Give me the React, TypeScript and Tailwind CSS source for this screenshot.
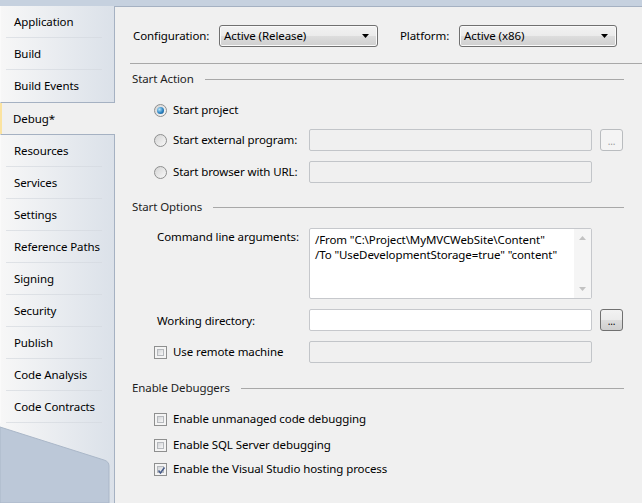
import React from "react";

const TAB_BG = "bg-linear-to-r from-[#f7f7f7] to-[#dbe1e9]";

function Tab({ label, sep = true }: { label: string; sep?: boolean }) {
  return (
    <div className="h-[32px] flex flex-col">
      <div className="flex-1 flex items-center pl-[13px] pt-[1px]">{label}</div>
      <div className={sep ? "ml-[5px] w-[96px] h-px bg-linear-to-r from-[#dfe2e6] to-[#d7dce3]" : "h-px"} />
    </div>
  );
}

function Combo({ text, w }: { text: string; w: string }) {
  return (
    <div
      className={`${w} h-[22px] border border-[#707070] rounded-[3px] bg-[linear-gradient(#f2f2f2,#ebebeb_50%,#dddddd_50%,#cfcfcf)] flex items-center pl-[4px] pr-[7px] shadow-[inset_0_0_0_1px_#fafafa]`}
    >
      <span className="flex-1">{text}</span>
      <svg width="8" height="5" viewBox="0 0 8 5">
        <polygon points="0,0 7,0 3.5,4" fill="#000" />
      </svg>
    </div>
  );
}

function Header({ text }: { text: string }) {
  return (
    <div className="h-[16px] flex items-center pl-[17px] pr-[18px]">
      <span className="text-[#1e1e1e]">{text}</span>
      <div className="flex-1 h-px bg-[#a8a8a8] ml-[11px]" />
    </div>
  );
}

function Radio({ checked }: { checked?: boolean }) {
  return (
    <div className="w-[13px] h-[13px] rounded-full border border-[#8e8f8f] bg-[linear-gradient(135deg,#d4d4d4,#f9f9f9)] flex items-center justify-center shrink-0">
      {checked && (
        <div className="w-[7px] h-[7px] rounded-full bg-[radial-gradient(circle_at_35%_35%,#b7e6fb,#2c83c2_55%,#0f4a7a)]" />
      )}
    </div>
  );
}

function Check({ checked }: { checked?: boolean }) {
  return (
    <div className="w-[13px] h-[13px] border border-[#8e8f8f] bg-[#f4f4f4] p-[2px] shrink-0 relative">
      <div className="w-full h-full border border-[#b6b9bd] bg-[linear-gradient(135deg,#d3d5d8,#f7f7f7)]" />
      {checked && (
        <svg className="absolute left-[1px] top-[1px]" width="11" height="11" viewBox="0 0 11 11">
          <path d="M2.5 5.5 L4.5 8 L8.5 2.5" stroke="#4a5e8a" strokeWidth="1.6" fill="none" />
        </svg>
      )}
    </div>
  );
}

function TextBox({ disabled, h = "h-[22px]" }: { disabled?: boolean; h?: string }) {
  return (
    <div
      className={`w-[283px] ${h} rounded-[2px] border ${
        disabled ? "border-[#c2c5c9] bg-[#f0f0f0]" : "border-[#c6c8cc] bg-white"
      }`}
    />
  );
}

function DotsButton({ disabled }: { disabled?: boolean }) {
  return (
    <div
      className={`ml-[8px] w-[23px] h-[22px] rounded-[3px] border flex items-end justify-center pb-[4px] text-[10px] leading-none ${
        disabled
          ? "border-[#b9bcbf] bg-[#f4f4f4] text-[#9a9a9a]"
          : "border-[#707070] bg-[linear-gradient(#f2f2f2,#ebebeb_50%,#dddddd_50%,#cfcfcf)] text-black"
      }`}
    >
      ...
    </div>
  );
}

export default function App() {
  return (
    <div className="w-[642px] h-[503px] overflow-hidden bg-[#c6d1df] pt-[6px] flex font-['Noto_Sans',sans-serif] text-[11.5px] tracking-[-0.1px] leading-[16px] text-black">
      <aside className="w-[115px] shrink-0 flex flex-col">
        <div className={`${TAB_BG} border-r border-b border-[#a5b1c2] border-l border-l-[#fafafa]`}>
          <Tab label="Application" />
          <Tab label="Build" />
          <Tab label="Build Events" sep={false} />
        </div>
        <div className="h-[31px] bg-[#f0f0f0] border-l-2 border-[#fbe3a0] flex items-center pl-[11px] pt-[1px]">
          Debug*
        </div>
        <div className={`${TAB_BG} border-r border-t border-[#a5b1c2] border-l border-l-[#fafafa]`}>
          <Tab label="Resources" />
          <Tab label="Services" />
          <Tab label="Settings" />
          <Tab label="Reference Paths" />
          <Tab label="Signing" />
          <Tab label="Security" />
          <Tab label="Publish" />
          <Tab label="Code Analysis" />
          <Tab label="Code Contracts" />
        </div>
        <div className={`flex-1 ${TAB_BG} border-r border-[#a5b1c2]`}>
          <svg className="block w-full h-full" viewBox="0 0 114 80" preserveAspectRatio="none">
            <path
              d="M0 4 L104 37 Q109 38.5 109 43 L109 80 L0 80 Z"
              fill="#bcc8d8"
              stroke="#aab7c8"
              strokeWidth="1"
            />
          </svg>
        </div>
      </aside>

      <main className="flex-1 bg-[#f0f0f0] border-t border-[#a5b1c2] flex flex-col">
        <div className="mt-[18px] h-[22px] flex items-center pl-[18px]">
          <span className="w-[86px]">Configuration:</span>
          <Combo text="Active (Release)" w="w-[159px]" />
          <span className="ml-[22px] w-[59px]">Platform:</span>
          <Combo text="Active (x86)" w="w-[158px]" />
        </div>

        <div className="mt-[16px] ml-[15px] h-px bg-[#a8a8a8]" />

        <div className="mt-[7px]">
          <Header text="Start Action" />
        </div>

        <div className="mt-[12px] h-[22px] flex items-center">
          <div className="w-[194px] pl-[39px] flex items-center gap-[6px]">
            <Radio checked />
            <span>Start project</span>
          </div>
        </div>

        <div className="mt-[8px] h-[22px] flex items-center">
          <div className="w-[194px] pl-[39px] flex items-center gap-[6px]">
            <Radio />
            <span>Start external program:</span>
          </div>
          <TextBox disabled />
          <DotsButton disabled />
        </div>

        <div className="mt-[10px] h-[22px] flex items-center">
          <div className="w-[194px] pl-[39px] flex items-center gap-[6px]">
            <Radio />
            <span>Start browser with URL:</span>
          </div>
          <TextBox disabled />
        </div>

        <div className="mt-[16px]">
          <Header text="Start Options" />
        </div>

        <div className="mt-[13px] flex items-start">
          <div className="w-[194px] pl-[42px] pt-[1px]">Command line arguments:</div>
          <div className="w-[283px] h-[71px] rounded-[2px] border border-[#c6c8cc] bg-white flex">
            <div className="flex-1 pl-[5px] pt-[3px] leading-[15px] whitespace-nowrap overflow-hidden">
              <div>{'/From "C:\\Project\\MyMVCWebSite\\Content"'}</div>
              <div>{'/To "UseDevelopmentStorage=true" "content"'}</div>
            </div>
            <div className="w-[17px] bg-[#f5f5f5] flex flex-col items-center justify-between py-[7px]">
              <svg width="7" height="4" viewBox="0 0 7 4">
                <polygon points="0,4 7,4 3.5,0" fill="#c2c2c2" />
              </svg>
              <svg width="7" height="4" viewBox="0 0 7 4">
                <polygon points="0,0 7,0 3.5,4" fill="#c2c2c2" />
              </svg>
            </div>
          </div>
        </div>

        <div className="mt-[10px] h-[22px] flex items-center">
          <div className="w-[194px] pl-[42px] pt-[1px]">Working directory:</div>
          <TextBox />
          <DotsButton />
        </div>

        <div className="mt-[10px] h-[22px] flex items-center">
          <div className="w-[194px] pl-[39px] flex items-center gap-[6px]">
            <Check />
            <span>Use remote machine</span>
          </div>
          <TextBox disabled />
        </div>

        <div className="mt-[17px]">
          <Header text="Enable Debuggers" />
        </div>

        <div className="mt-[15px] h-[16px] flex items-center pl-[39px] gap-[6px]">
          <Check />
          <span>Enable unmanaged code debugging</span>
        </div>
        <div className="mt-[10px] h-[16px] flex items-center pl-[39px] gap-[6px]">
          <Check />
          <span>Enable SQL Server debugging</span>
        </div>
        <div className="mt-[8px] h-[16px] flex items-center pl-[39px] gap-[6px]">
          <Check checked />
          <span>Enable the Visual Studio hosting process</span>
        </div>
      </main>
    </div>
  );
}
